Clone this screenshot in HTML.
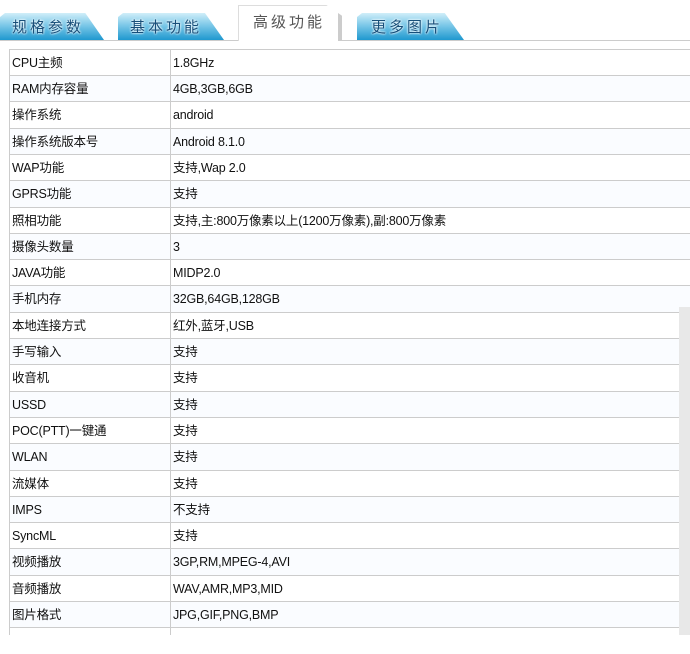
<!DOCTYPE html><html><head><meta charset="utf-8"><style>
body{margin:0;width:690px;height:635px;background:#fff;overflow:hidden;position:relative;font-family:"Liberation Sans","Noto Sans CJK SC",sans-serif;}
.tab{position:absolute;top:13px;height:27px;clip-path:polygon(0 4px,5px 0,82% 0,100% 100%,0 100%);background:linear-gradient(#d0eef9,#7cc8e8 45%,#1f98cf);font-size:15px;letter-spacing:3px;color:#184f7a;line-height:30px;text-shadow:0 0 2px #fff,0 0 2px #fff;padding-left:12px;box-sizing:border-box}
.act{position:absolute;left:238px;top:5px;width:104px;height:36px;background:#fff;border:1px solid #ddd;border-bottom:none;border-right:4px solid #ccc;clip-path:polygon(0 0,85% 0,100% 30%,100% 100%,0 100%);font-size:15px;letter-spacing:3px;color:#555;line-height:34px;padding-left:14px;box-sizing:border-box}
.line{position:absolute;left:0;top:40px;width:690px;height:1px;background:#ccc}
.r{position:absolute;left:9px;width:681px;height:26px;border-top:1px solid #ccc;font-size:12.5px;letter-spacing:-0.2px;color:#111;line-height:26px}
.r span{position:absolute;left:3px}.r b{font-weight:normal;position:absolute;left:164px}
.vl{position:absolute;left:9px;top:49px;width:1px;height:586px;background:#ccc}
.vl2{position:absolute;left:170px;top:49px;width:1px;height:586px;background:#ccc}
.sb{position:absolute;left:679px;top:307px;width:11px;height:328px;background:#e8e8e8}
</style></head><body>
<div class="tab" style="left:0;width:104px">规格参数</div>
<div class="tab" style="left:118px;width:106px">基本功能</div>
<div class="tab" style="left:357px;width:107px;padding-left:14px">更多图片</div>
<div class="line"></div>
<div class="act">高级功能</div>
<div id="t">
<div class="r" style="top:49px"><span>CPU主频</span><b>1.8GHz</b></div>
<div class="r" style="top:75px;background:#fafcff"><span>RAM内存容量</span><b>4GB,3GB,6GB</b></div>
<div class="r" style="top:101px"><span>操作系统</span><b>android</b></div>
<div class="r" style="top:128px;background:#fafcff"><span>操作系统版本号</span><b>Android 8.1.0</b></div>
<div class="r" style="top:154px"><span>WAP功能</span><b>支持,Wap 2.0</b></div>
<div class="r" style="top:180px;background:#fafcff"><span>GPRS功能</span><b>支持</b></div>
<div class="r" style="top:207px"><span>照相功能</span><b>支持,主:800万像素以上(1200万像素),副:800万像素</b></div>
<div class="r" style="top:233px;background:#fafcff"><span>摄像头数量</span><b>3</b></div>
<div class="r" style="top:259px"><span>JAVA功能</span><b>MIDP2.0</b></div>
<div class="r" style="top:285px;background:#fafcff"><span>手机内存</span><b>32GB,64GB,128GB</b></div>
<div class="r" style="top:312px"><span>本地连接方式</span><b>红外,蓝牙,USB</b></div>
<div class="r" style="top:338px;background:#fafcff"><span>手写输入</span><b>支持</b></div>
<div class="r" style="top:364px"><span>收音机</span><b>支持</b></div>
<div class="r" style="top:391px;background:#fafcff"><span>USSD</span><b>支持</b></div>
<div class="r" style="top:417px"><span>POC(PTT)一键通</span><b>支持</b></div>
<div class="r" style="top:443px;background:#fafcff"><span>WLAN</span><b>支持</b></div>
<div class="r" style="top:470px"><span>流媒体</span><b>支持</b></div>
<div class="r" style="top:496px;background:#fafcff"><span>IMPS</span><b>不支持</b></div>
<div class="r" style="top:522px"><span>SyncML</span><b>支持</b></div>
<div class="r" style="top:548px;background:#fafcff"><span>视频播放</span><b>3GP,RM,MPEG-4,AVI</b></div>
<div class="r" style="top:575px"><span>音频播放</span><b>WAV,AMR,MP3,MID</b></div>
<div class="r" style="top:601px;background:#fafcff"><span>图片格式</span><b>JPG,GIF,PNG,BMP</b></div>
<div class="r" style="top:627px"></div>
</div>
<div class="vl"></div><div class="vl2"></div>
<div class="sb"></div>
</body></html>
